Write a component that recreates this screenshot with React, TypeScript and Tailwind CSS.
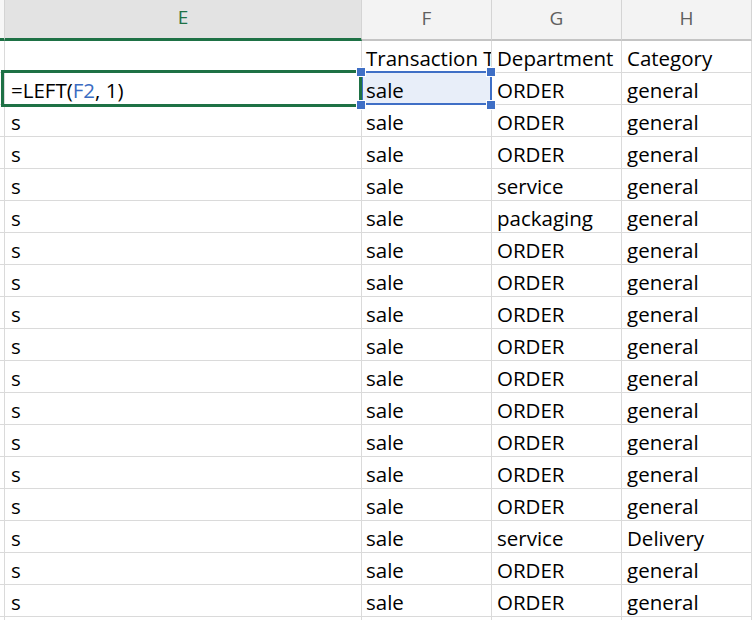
const font = { fontFamily: '"Open Sans", "Noto Sans", sans-serif' };

const depts = [
  "ORDER", "ORDER", "ORDER", "service", "packaging", "ORDER", "ORDER", "ORDER", "ORDER",
  "ORDER", "ORDER", "ORDER", "ORDER", "ORDER", "service", "ORDER", "ORDER",
];

const cats = depts.map((_, i) => (i === 14 ? "Delivery" : "general"));

function Cell({ children, className = "" }: { children?: React.ReactNode; className?: string }) {
  return (
    <div
      className={`h-[32px] border-r border-b border-[#dadada] flex items-end pb-[4px] overflow-hidden whitespace-nowrap text-[20.5px] leading-[20px] text-black ${className}`}
    >
      {children}
    </div>
  );
}

function Head({ label, active = false }: { label: string; active?: boolean }) {
  return (
    <div
      className={`h-[41px] border-r border-[#d4d4d4] flex items-center justify-center pb-[3px] text-[19px] ${
        active
          ? "bg-[#e3e3e3] text-[#1e7145] border-b-[3px] border-b-[#1e7145]"
          : "bg-[#f3f3f3] text-[#5f5f5f] border-b-2 border-b-[#c4c4c4]"
      }`}
    >
      {label}
    </div>
  );
}

export default function App() {
  return (
    <div className="relative w-[752px] h-[620px] overflow-hidden bg-white" style={font}>
      <div className="grid grid-cols-[5px_357px_130px_130px_130px]">
        {/* column headers */}
        <div className="h-[41px] border-r border-[#d4d4d4] bg-[#f7f7f7] border-b-[3px] border-b-[#1e7145]" />
        <Head label="E" active />
        <Head label="F" />
        <Head label="G" />
        <Head label="H" />

        {/* row 1 */}
        <Cell />
        <Cell />
        <Cell className="pl-[4px]">Transaction Type</Cell>
        <Cell className="pl-[5px]">Department</Cell>
        <Cell className="pl-[5px]">Category</Cell>

        {/* data rows */}
        {depts.map((d, i) => (
          <div key={i} className="contents">
            <Cell />
            <Cell className="pl-[6px]">
              {i === 0 ? (
                <span>
                  =LEFT(<span className="text-[#3b6cc2]">F2</span>, 1)
                </span>
              ) : (
                "s"
              )}
            </Cell>
            <Cell className={`pl-[4px] ${i === 0 ? "bg-[#e8eef9]" : ""}`}>sale</Cell>
            <Cell className="pl-[5px]">{d}</Cell>
            <Cell className="pl-[5px]">{cats[i]}</Cell>
          </div>
        ))}

        {/* partial row */}
        <Cell />
        <Cell />
        <Cell />
        <Cell />
        <Cell />
      </div>

      {/* reference highlight on F2 */}
      <div className="absolute left-[361px] top-[71px] w-[131px] h-[34px] border-2 border-[#3f6fc6]" />

      {/* active cell E2 */}
      <div className="absolute left-[1px] top-[70px] w-[361px] h-[37px] border-[3px] border-[#1e7145]" />

      {/* handles */}
      <div className="absolute left-[357px] top-[68px] w-[8px] h-[8px] bg-[#3f6fc6] outline outline-1 outline-white" />
      <div className="absolute left-[487px] top-[68px] w-[8px] h-[8px] bg-[#3f6fc6] outline outline-1 outline-white" />
      <div className="absolute left-[357px] top-[101px] w-[8px] h-[8px] bg-[#3f6fc6] outline outline-1 outline-white" />
      <div className="absolute left-[487px] top-[101px] w-[8px] h-[8px] bg-[#3f6fc6] outline outline-1 outline-white" />
    </div>
  );
}
